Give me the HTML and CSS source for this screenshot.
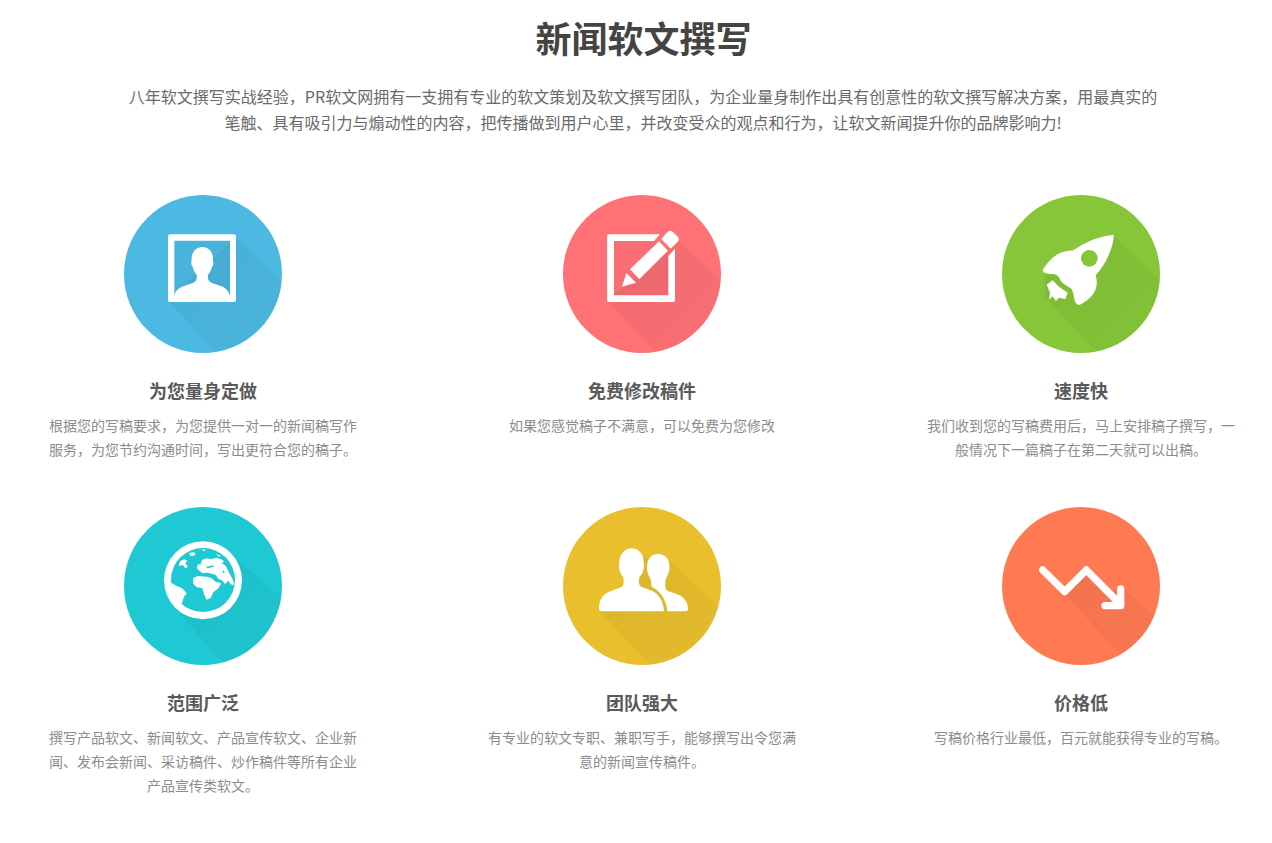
FILE: index.html
```html
<!DOCTYPE html>
<html lang="zh-CN">
<head>
<meta charset="utf-8">
<title>新闻软文撰写</title>
<link rel="stylesheet" href="styles.css">
</head>
<body>
<main class="page">
  <h1 class="title">新闻软文撰写</h1>
  <p class="intro">八年软文撰写实战经验，PR软文网拥有一支拥有专业的软文策划及软文撰写团队，为企业量身制作出具有创意性的软文撰写解决方案，用最真实的笔触、具有吸引力与煽动性的内容，把传播做到用户心里，并改变受众的观点和行为，让软文新闻提升你的品牌影响力!</p>
  <section class="grid">
    <article class="card">
      <svg class="icon" viewBox="42 29 474 474" aria-hidden="true">
        <defs>
          <linearGradient id="fade" x1="0" y1="0" x2="1" y2="1">
            <stop offset="0.2" stop-color="#000" stop-opacity="0.05"/>
            <stop offset="1" stop-color="#000" stop-opacity="0.02"/>
          </linearGradient>
        </defs>
        <clipPath id="c1"><circle cx="279" cy="266" r="237"/></clipPath>
        <circle class="blue" cx="279" cy="266" r="237"/>
        <polygon fill="url(#fade)" clip-path="url(#c1)" points="378,155 530,305 530,520 325,510 174,345"/>
        <rect class="shade-in" x="193" y="166" width="167" height="166"/>
        <path class="white" fill-rule="evenodd" d="M180 147H372a6 6 0 0 1 6 6V344a6 6 0 0 1-6 6H180a6 6 0 0 1-6-6V153a6 6 0 0 1 6-6ZM193 166V332H360V166Z"/>
        <path class="white" d="M193 332C195 318 205 309 220 303L250 292C260 287 261 280 260 268C255 262 250 254 248 244C243 240 243 230 245 226C243 203 256 185 277 185C298 185 311 203 309 226C311 230 311 240 306 244C304 254 299 262 294 268C293 280 294 287 304 292L334 303C349 309 356 318 360 332Z"/>
      </svg>
      <h2 class="name">为您量身定做</h2>
      <p class="desc">根据您的写稿要求，为您提供一对一的新闻稿写作服务，为您节约沟通时间，写出更符合您的稿子。</p>
    </article>
    <article class="card">
      <svg class="icon" viewBox="39 29 474 474" aria-hidden="true">
        <clipPath id="c2"><circle cx="276" cy="266" r="237"/></clipPath>
        <circle class="coral" cx="276" cy="266" r="237"/>
        <polygon fill="url(#fade)" clip-path="url(#c2)" points="385,165 530,305 530,520 325,510 171,345"/>
        <polygon class="shade-in" points="192,167 312,167 355,212 355,330 192,330"/>
        <path class="white" d="M177 147H330L312 167H192V330H355V212L375 190V344a6 6 0 0 1-6 6H177a6 6 0 0 1-6-6V153a6 6 0 0 1 6-6Z"/>
        <path class="white" d="M216 304L229 263L258 292ZM240 252L327 168L354 196L268 282ZM334 161L352 141Q361 132 370 141L382 153Q391 162 382 171L362 190Z"/>
      </svg>
      <h2 class="name">免费修改稿件</h2>
      <p class="desc">如果您感觉稿子不满意，可以免费为您修改</p>
    </article>
    <article class="card">
      <svg class="icon" viewBox="36 29 474 474" aria-hidden="true">
        <clipPath id="c3"><circle cx="273" cy="266" r="237"/></clipPath>
        <circle class="green" cx="273" cy="266" r="237"/>
        <polygon fill="url(#fade)" clip-path="url(#c3)" points="372,150 530,305 530,520 330,510 165,335 165,265"/>
        <path class="white" d="M372 148C335 152 290 165 250 195C232 196 215 200 200 208C182 220 168 236 158 255C160 263 170 266 180 266C192 265 205 268 209 280C214 294 232 302 243 309C250 318 252 335 254 345C256 355 262 360 270 358C285 350 300 340 312 322C322 305 322 285 317 270C345 240 368 195 372 148Z"/>
        <circle class="green" cx="298" cy="219" r="25"/>
        <path class="white" d="M170 298L188 285L205 303L233 322L226 341L206 337L198 347L187 333L177 343L180 322Z"/>
      </svg>
      <h2 class="name">速度快</h2>
      <p class="desc">我们收到您的写稿费用后，马上安排稿子撰写，一般情况下一篇稿子在第二天就可以出稿。</p>
    </article>
    <article class="card">
      <svg class="icon" viewBox="42 29 474 474" aria-hidden="true">
        <clipPath id="c4"><circle cx="279" cy="266" r="237"/></clipPath>
        <circle class="teal" cx="279" cy="266" r="237"/>
        <polygon fill="url(#fade)" clip-path="url(#c4)" points="385,190 530,310 530,520 350,510 210,350"/>
        <circle class="white" cx="279" cy="249" r="117"/>
        <circle class="teal" cx="279" cy="248" r="96"/>
        <path class="white" d="M183 256L200 266L216 272L230 288L222 298L215 320L200 306L188 284Z"/>
        <path class="white" d="M250 242L264 236L290 238L305 243L318 254L334 257L326 272L310 285L302 302L289 307L282 290L276 272L260 270L249 258Z"/>
        <path class="white" d="M260 212L264 200L271 202L276 188L290 183L304 186L318 181L334 186L342 192L336 197L348 207L356 224L366 242L372 257L370 264L361 260L355 250L345 260L338 250L325 244L316 232L305 229L292 226L278 228L268 220Z"/>
        <path class="white" d="M238 168L250 164L258 170L248 176L240 175ZM210 192L222 186L232 190L226 198L234 208L226 213L218 203L207 206ZM274 156L288 158L281 162ZM318 170L334 176L326 178Z"/>
        <path class="teal" d="M288 209L308 204L311 208L292 213ZM340 218L345 226L338 227Z"/>
      </svg>
      <h2 class="name">范围广泛</h2>
      <p class="desc">撰写产品软文、新闻软文、产品宣传软文、企业新闻、发布会新闻、采访稿件、炒作稿件等所有企业产品宣传类软文。</p>
    </article>
    <article class="card">
      <svg class="icon" viewBox="39 29 474 474" aria-hidden="true">
        <clipPath id="c5"><circle cx="276" cy="266" r="237"/></clipPath>
        <circle class="yellow" cx="276" cy="266" r="237"/>
        <polygon fill="url(#fade)" clip-path="url(#c5)" points="280,180 358,190 515,335 520,520 310,510 147,342"/>
        <path class="white" d="M153 342Q147 342 147 330C148 305 160 290 178 283L212 270C222 265 222 255 220 240C214 232 210 225 208 215C206 210 207 200 208 195C208 170 225 153 245 153C265 153 282 170 281 195C282 200 283 210 281 215C279 225 275 232 268 240C266 255 266 265 276 270L300 278C325 286 340 310 342 342Z"/>
        <path class="white" d="M352 342C350 310 332 280 304 268C306 258 302 248 299 240C294 232 292 225 291 215C290 210 292 205 292 200C292 185 305 170 325 170C345 170 358 185 358 205C360 212 358 220 355 228C352 236 348 245 346 250C345 262 346 275 352 280L385 292C402 298 414 315 414 335Q414 342 408 342Z"/>
      </svg>
      <h2 class="name">团队强大</h2>
      <p class="desc">有专业的软文专职、兼职写手，能够撰写出令您满意的新闻宣传稿件。</p>
    </article>
    <article class="card">
      <svg class="icon" viewBox="36 29 474 474" aria-hidden="true">
        <clipPath id="c6"><circle cx="273" cy="266" r="237"/></clipPath>
        <circle class="orange" cx="273" cy="266" r="237"/>
        <polygon fill="url(#fade)" clip-path="url(#c6)" points="224,292 289,236 345,295 392,270 510,365 510,520 395,475"/>
        <path class="arrow" d="M158 218L224 283L289 218L392 322M392 275V325H345"/>
      </svg>
      <h2 class="name">价格低</h2>
      <p class="desc">写稿价格行业最低，百元就能获得专业的写稿。</p>
    </article>
  </section>
</main>
</body>
</html>
```

FILE: styles.css
```css
* { box-sizing: border-box; }
html, body { margin: 0; background: #fff; }
body { font-family: "Noto Sans CJK SC", "Liberation Sans", sans-serif; overflow-x: hidden; }
.page { padding: 10px 36px 0 48px; }
.title { margin: 0; padding-left: 3px; font-size: 36px; line-height: 54px; font-weight: 700; color: #444; text-align: center; }
.intro { width: 1042px; margin: 19px auto 0; padding-left: 2px; font-size: 16px; line-height: 26px; color: #6a6a6a; text-align: center; }
.grid { display: grid; grid-template-columns: repeat(3, 310px); column-gap: 129px; row-gap: 46px; margin-top: 60px; }
.card { text-align: center; }
.icon { display: block; width: 158px; height: 158px; margin: 0 auto; }
.name { margin: 25px 0 0; font-size: 18px; line-height: 24px; font-weight: 700; color: #5a5a5a; }
.desc { margin: 11px 0 0; font-size: 14px; line-height: 24px; color: #8c8c8c; }
.white { fill: #fff; }
.blue { fill: #4bb9e1; }
.coral { fill: #ff7175; }
.green { fill: #86c638; }
.teal { fill: #1fc9d4; }
.yellow { fill: #e9bf2d; }
.orange { fill: #ff7a52; }
.shade-in { fill: #000; opacity: .025; }
.arrow { fill: none; stroke: #fff; stroke-width: 22; stroke-linecap: round; stroke-linejoin: round; }
```
